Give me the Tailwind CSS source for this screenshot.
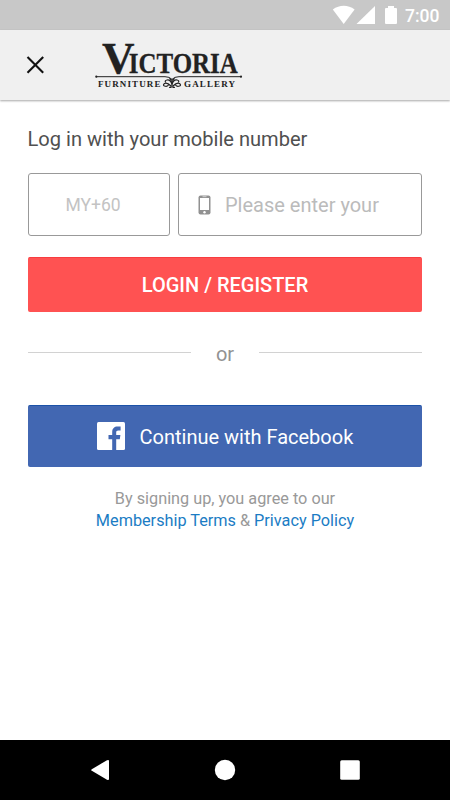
<!DOCTYPE html>
<html lang="en">
<head>
<meta charset="utf-8">
<title>Victoria Furniture Gallery – Log in</title>
<script src="https://cdn.jsdelivr.net/npm/@tailwindcss/browser@4"></script>
</head>
<body class="bg-white">
<div class="flex h-[800px] w-[450px] flex-col overflow-hidden bg-white font-[Roboto,sans-serif]">
  <!-- Status bar -->
  <div class="flex h-[30px] shrink-0 items-center justify-end bg-[#c8c8c8] pr-[10px] text-white">
    <svg class="h-[30px] w-[70px]" viewBox="330 0 70 30" fill="currentColor">
      <path d="M332.8 9.6C339.5 4.6 348 4.6 354.600 9.600L343.700 24z"/>
      <path d="M375 6v18h-18.500z"/>
      <path d="M385 9q0-1 1-1h2V6h6v2h2q1 0 1 1v14q0 1-1 1h-10q-1 0-1-1z"/>
    </svg>
    <span class="ml-[5px] mt-[2px] w-[35px] whitespace-nowrap text-[17.500px] font-medium leading-[20px]">7:00</span>
  </div>

  <!-- App bar -->
  <header class="z-10 flex h-[70px] shrink-0 items-center bg-[#f0f0f0] shadow-[0_1px_2px_rgba(0,0,0,0.35)]">
    <svg class="ml-[25px] h-5 w-5" viewBox="0 0 20 20" fill="none" stroke="#111" stroke-width="2.100"><path d="M2.500 2.100L18.200 17.800M18.200 2.100L2.500 17.800"/></svg>
    <svg class="ml-[48px] h-[54px] w-[152px] overflow-visible" viewBox="93 38 152 54" fill="#222" font-family="'Liberation Serif', serif" font-weight="700">
      <text y="73.300" stroke="#222" stroke-width=".300"><tspan x="102" font-size="45" textLength="32.500" lengthAdjust="spacingAndGlyphs">V</tspan><tspan x="128.800" font-size="29" textLength="109" lengthAdjust="spacingAndGlyphs">ICTORIA</tspan></text>
      <path d="M96 76.700H165Q170 76.700 172 79.500Q174 76.700 179 76.700H241" fill="none" stroke="#222" stroke-width="1"/>
      <circle cx="96.300" cy="76.700" r="1.100"/><circle cx="241" cy="76.700" r="1.100"/>
      <text x="98" y="86.700" font-size="9" textLength="62.500">FURNITURE</text>
      <text x="184" y="86.700" font-size="9" textLength="51">GALLERY</text>
      <g fill="none" stroke="#222" stroke-width="1.200" stroke-linecap="round">
        <path d="M172 79v8M172 85Q171 79.500 167 80Q164.500 80.500 165.500 82M172 85Q173 79.500 177 80Q179.500 80.500 178.500 82"/>
        <path d="M171 86Q167 82 164.500 83.500Q162.500 85 164.500 86Q167 87 168.500 85M173 86Q177 82 179.500 83.500Q181.500 85 179.500 86Q177 87 175.500 85M169.500 87.300h1.500M173 87.300h1.500M169.800 78.500l1.200 2M174.200 78.500l-1.200 2"/>
      </g>
    </svg>
  </header>

  <!-- Login form -->
  <main class="flex grow flex-col px-[28px] pt-[27px]">
    <h1 class="-ml-[0.500px] whitespace-nowrap text-[20.080px] leading-[24px] text-[#505050]">Log in with your mobile number</h1>
    <div class="mt-[22px] flex h-[63px] gap-[8px]">
      <div class="flex w-[142px] items-center justify-center rounded-[3px] border border-[#999] pr-[12px] pt-[2px] text-[17.500px] text-[#c3c3c3]">MY+60</div>
      <div class="flex grow items-center rounded-[3px] border border-[#999] pl-[18.500px]">
        <svg class="h-5 w-[13px] shrink-0" viewBox="0 0 13 20"><rect x=".500" y=".500" width="12" height="19" rx="2" fill="#919191"/><path d="M2 3h9v12H2z" fill="#fff"/><path d="M4.500 1.700h4" stroke="#ddd" stroke-width=".800"/><circle cx="6.500" cy="17.200" r="1.200" fill="#fff"/></svg>
        <span class="ml-[14.500px] whitespace-nowrap text-[20px] text-[#bbb]">Please enter your</span>
      </div>
    </div>
    <button class="mt-[21px] flex h-[55px] items-center justify-center rounded-[2px] border-t border-[#f83c3f] bg-[#ff5252] pb-px text-[20px] font-medium text-white">LOGIN / REGISTER</button>
    <div class="mt-[28px] flex h-[24px] items-center">
      <div class="h-px grow bg-[#d2d2d2]"></div>
      <span class="w-[68px] pt-[3px] text-center text-[20px] leading-[24px] text-[#929292]">or</span>
      <div class="h-px grow bg-[#d2d2d2]"></div>
    </div>
    <button class="mt-[41px] flex h-[62px] items-center rounded-[2px] border-t border-[#1c52a8] bg-[#4267b2] pl-[69px] text-white">
      <svg class="-mt-px h-7 w-7" viewBox="0 0 28 28"><rect width="28" height="28" rx="1.500" fill="#fff"/><path d="M15.200 28V17.200H11.500V13h3.700V9.900C15.200 6.300 17.400 4.400 20.600 4.400Q22.500 4.400 23.600 4.600V8.400H21.300C19.700 8.400 19.200 9.200 19.200 10.400V13h4.200L22.800 17.200H19.200V28z" fill="#4267b2"/></svg>
      <span class="ml-[14.500px] whitespace-nowrap text-[20px]">Continue with Facebook</span>
    </button>
    <p class="mt-[21px] whitespace-nowrap text-center text-[16.250px] leading-[22px] text-[#999]">By signing up, you agree to our<br><a class="text-[#1b7cc4]">Membership Terms</a> &amp; <a class="text-[#1b7cc4]">Privacy Policy</a></p>
  </main>

  <!-- Navigation bar -->
  <nav class="h-[60px] shrink-0 bg-black">
    <svg class="h-[60px] w-[450px]" viewBox="0 740 450 60" fill="#fff"><path d="M91.800 769.200L107 760.200Q109 759.300 109 761V779Q109 780.700 107 779.800L91.800 770.800Q90.500 770 91.800 769.200z"/><circle cx="225" cy="770" r="10.200"/><rect x="340.200" y="760.200" width="19.600" height="19.600" rx="1.500"/></svg>
  </nav>
</div>
</body>
</html>
